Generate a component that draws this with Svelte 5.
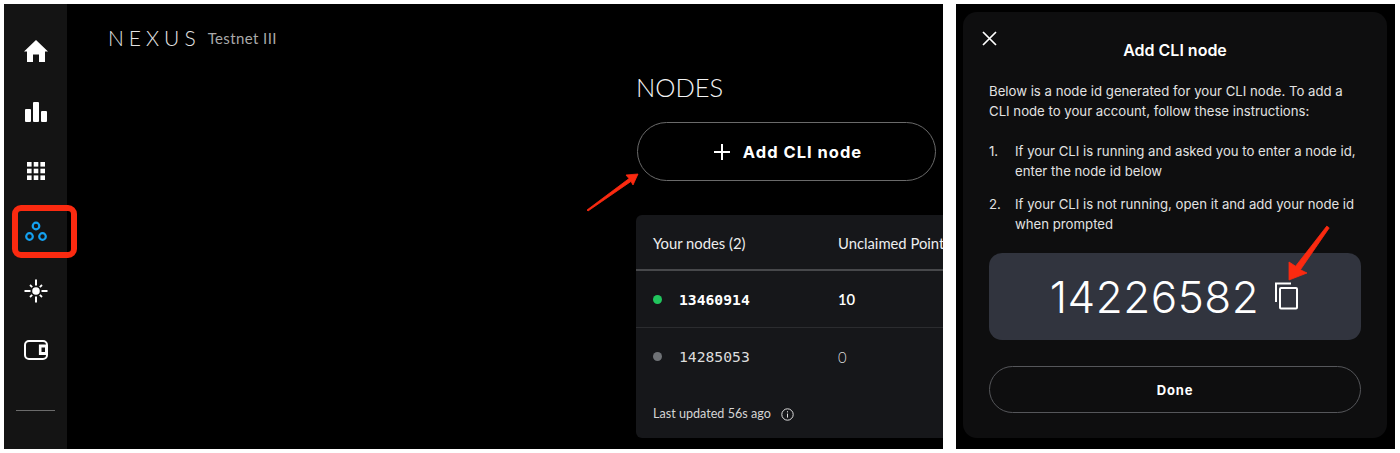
<script>
  const navIcons = ['home', 'bars', 'grid', 'nodes', 'sun', 'wallet'];
  const nodes = [
    { id: '13460914', points: '10', online: true },
    { id: '14285053', points: '0', online: false }
  ];
</script>

<div class="page">
  <section class="shot left">
    <nav class="sidebar">
      {#each navIcons as icon}
        <div class="nav-item">
          {#if icon === 'home'}
            <svg width="26" height="24" viewBox="0 0 26 24" fill="#fff">
              <path d="M13 1 L25 12.4 L22 12.4 L22 23 L16 23 L16 15.5 L10 15.5 L10 23 L4 23 L4 12.4 L1 12.4 Z" />
            </svg>
          {:else if icon === 'bars'}
            <svg class="bars" width="24" height="22" viewBox="0 0 24 22" fill="#fff">
              <rect x="1" y="8" width="6" height="13" rx="1" />
              <rect x="9" y="1" width="6" height="20" rx="1" />
              <rect x="17" y="10" width="6" height="11" rx="1" />
            </svg>
          {:else if icon === 'grid'}
            <svg width="18" height="18" viewBox="0 0 18 18" fill="#fff">
              <rect x="0" y="0" width="4.6" height="4.6" /><rect x="6.7" y="0" width="4.6" height="4.6" /><rect x="13.4" y="0" width="4.6" height="4.6" />
              <rect x="0" y="6.7" width="4.6" height="4.6" /><rect x="6.7" y="6.7" width="4.6" height="4.6" /><rect x="13.4" y="6.7" width="4.6" height="4.6" />
              <rect x="0" y="13.4" width="4.6" height="4.6" /><rect x="6.7" y="13.4" width="4.6" height="4.6" /><rect x="13.4" y="13.4" width="4.6" height="4.6" />
            </svg>
          {:else if icon === 'nodes'}
            <svg width="24" height="22" viewBox="0 0 24 22" fill="none" stroke="#14a1f0" stroke-width="2.2">
              <circle cx="12" cy="6" r="3.3" />
              <circle cx="5.5" cy="16.5" r="3.3" />
              <circle cx="18.5" cy="16.5" r="3.3" />
            </svg>
          {:else if icon === 'sun'}
            <svg width="24" height="24" viewBox="0 0 24 24" fill="none" stroke="#fff" stroke-width="2">
              <circle cx="12" cy="12" r="3.8" fill="#fff" stroke="none" />
              <path d="M12 0.5V6.5M12 17.5V23.5M0.5 12H6.5M17.5 12H23.5" />
              <path d="M6 6L8.2 8.2M18 6L15.8 8.2M6 18L8.2 15.8M18 18L15.8 15.8" stroke-width="1.8" />
            </svg>
          {:else}
            <svg class="wallet" width="24" height="20" viewBox="0 0 24 20" fill="none" stroke="#fff" stroke-width="2">
              <rect x="1" y="1" width="22" height="18" rx="4" />
              <path d="M23 5H15.5V14.5H23" fill="#fff" stroke-width="1.2" />
              <rect x="17.5" y="7.5" width="3.5" height="4.5" fill="#141414" stroke="none" />
            </svg>
          {/if}
        </div>
      {/each}
      <div class="nav-rule"></div>
    </nav>

    <main class="content">
      <header class="brand">
        <span class="wordmark">NEXUS</span>
        <span class="network">Testnet III</span>
      </header>

      <div class="nodes-col">
        <h1>NODES</h1>
        <button class="add-btn">
          <svg width="16" height="16" viewBox="0 0 16 16" stroke="#fff" stroke-width="2">
            <path d="M8 0V16M0 8H16" />
          </svg>
          Add CLI node
        </button>

        <div class="card">
          <div class="row head">
            <span class="col-id">Your nodes (2)</span>
            <span class="col-points">Unclaimed Points</span>
          </div>
          {#each nodes as node}
            <div class="row node" class:online={node.online}>
              <span class="col-id">
                <i class="dot"></i>
                <span class="node-id">{node.id}</span>
              </span>
              <span class="col-points">{node.points}</span>
            </div>
          {/each}
          <div class="updated">
            Last updated 56s ago
            <svg width="13" height="13" viewBox="0 0 13 13" fill="none" stroke="#ddd" stroke-width="1">
              <circle cx="6.5" cy="6.5" r="5.7" />
              <path d="M6.5 5.6V9.6M6.5 3.2V4.4" />
            </svg>
          </div>
        </div>
      </div>
    </main>

    <div class="highlight"></div>
    <svg class="arrow" style="left:580px;top:165px" width="70" height="52" viewBox="0 0 70 52">
      <path d="M3 41 L45 9.6 L42 6 L54 5 L49 16 L47 12.4 L4 42 Z" fill="#fb2a10" stroke="#fb2a10" stroke-width="0.8" stroke-linejoin="round" />
    </svg>
  </section>

  <section class="shot right">
    <div class="modal">
      <button class="close" aria-label="Close">
        <svg width="15" height="15" viewBox="0 0 15 15" stroke="#fff" stroke-width="1.7">
          <path d="M1 1L14 14M14 1L1 14" />
        </svg>
      </button>
      <h2>Add CLI node</h2>
      <p class="intro">Below is a node id generated for your CLI node. To add a CLI node to your account, follow these instructions:</p>
      <ol>
        <li><span class="num">1.</span><span>If your CLI is running and asked you to enter a node id, enter the node id below</span></li>
        <li><span class="num">2.</span><span>If your CLI is not running, open it and add your node id when prompted</span></li>
      </ol>
      <div class="id-box">
        <span class="big-id">14226582</span>
        <svg class="copy" width="25" height="29" viewBox="0 0 25 29" fill="none" stroke="#fff" stroke-width="2">
          <path d="M2 21V2.5H17" />
          <rect x="6" y="7" width="17" height="20.5" rx="1" />
        </svg>
      </div>
      <button class="done">Done</button>
    </div>
    <svg class="arrow" style="left:326px;top:218px" width="54" height="70" viewBox="0 0 54 70">
      <path d="M44.8 4.1 L13.6 44.2 L7 40 L7 58 L25 51 L18.4 47.8 L47.2 5.9 Z" fill="#fb2a10" stroke="#fb2a10" stroke-width="0.8" stroke-linejoin="round" />
    </svg>
  </section>
</div>

<style>
  :global(body) { margin: 0; background: #fff; }

  .page {
    display: flex;
    gap: 13px;
    padding: 4px 5px 4px 4px;
    height: 453px;
    box-sizing: border-box;
    font-family: 'Lato', sans-serif;
    color: #fff;
  }

  .shot { position: relative; height: 445px; overflow: hidden; background: #000; }
  .left { width: 939px; display: flex; }
  .right { width: 439px; }

  .sidebar {
    width: 63px;
    background: #141414;
    display: flex;
    flex-direction: column;
    align-items: center;
    padding-top: 17.5px;
    box-sizing: border-box;
    flex-shrink: 0;
  }
  .nav-item {
    height: 59.8px;
    display: flex;
    align-items: center;
    justify-content: center;
    flex-shrink: 0;
  }
  .bars { margin-top: 2px; }
  .wallet { margin-bottom: 1px; }
  .nav-rule { width: 39px; height: 1px; background: #6b6b6b; margin-top: 29.5px; }

  .content { flex: 1; min-width: 0; padding: 23px 0 0 41px; }
  .brand { display: flex; align-items: center; height: 22px; }
  .wordmark {
    font-weight: 300;
    font-size: 21px;
    line-height: 22px;
    letter-spacing: 5px;
    color: #e4e4e4;
  }
  .network { font-size: 15px; line-height: 22px; margin-left: 7px; color: #a9a9a9; letter-spacing: 0.4px; }

  .nodes-col { margin: 23px 0 0 529px; width: 400px; }
  h1 {
    margin: 0 0 0 -1px;
    font-weight: 300;
    font-size: 25.5px;
    line-height: 30px;
    color: #f4f4f4;
  }
  .add-btn {
    margin-top: 20px;
    width: 299px;
    height: 59px;
    border: 1px solid #6a6a6a;
    border-radius: 30px;
    background: #000;
    color: #fff;
    font-family: 'Inter', sans-serif;
    font-weight: 700;
    font-size: 16.5px;
    letter-spacing: 1px;
    display: flex;
    align-items: center;
    justify-content: center;
    gap: 13px;
    padding: 0 0 0 3px;
  }

  .card {
    margin-top: 34px;
    margin-left: -1px;
    height: 223px;
    background: #16171a;
    border-radius: 6px;
  }
  .row { display: flex; align-items: center; font-size: 14.8px; }
  .head { height: 54px; border-bottom: 2px solid #47484b; color: #eee; padding-top: 1px; box-sizing: content-box; height: 53px; }
  .node { height: 57px; border-bottom: 1px solid #2b2c2f; color: #ddd; box-sizing: border-box; }
  .node + .node { border-bottom: none; }
  .node + .node .col-points { font-weight: 300; }
  .col-id { width: 202px; padding-left: 17px; box-sizing: border-box; display: flex; align-items: center; flex-shrink: 0; }
  .col-points { white-space: nowrap; }
  .dot { width: 9px; height: 9px; border-radius: 50%; background: #6f7276; margin-right: 17px; }
  .online .dot { background: #21c55d; }
  .node-id { font-family: 'DejaVu Sans Mono', monospace; font-size: 14.7px; }
  .online { color: #fff; font-weight: 700; }
  .online .col-points { font-weight: 600; }
  .updated {
    margin-top: 21px;
    padding-left: 17px;
    font-size: 12.6px;
    line-height: 16px;
    color: #d4d4d4;
    display: flex;
    align-items: center;
    gap: 10px;
  }

  .highlight {
    position: absolute;
    left: 8px;
    top: 201px;
    width: 65px;
    height: 53px;
    box-sizing: border-box;
    border: 6px solid #fb2a10;
    border-radius: 9px;
  }
  .arrow { position: absolute; }

  .modal {
    margin: 8px 0 0 7px;
    width: 424px;
    height: 426px;
    background: #0e0e0f;
    border-radius: 14px;
    position: relative;
    padding: 26px 26px 0;
    box-sizing: border-box;
    font-family: 'Inter', sans-serif;
    font-size: 13.2px;
    line-height: 20px;
    color: #e2e2e2;
  }
  .close {
    position: absolute;
    left: 19px;
    top: 19px;
    background: none;
    border: none;
    padding: 0;
    line-height: 0;
  }
  h2 { margin: 0; font-size: 16px; line-height: 24px; font-weight: 600; color: #fff; text-align: center; }
  .intro { margin: 19px 0 0; }
  ol { list-style: none; margin: 20px 0 0; padding: 0; display: flex; flex-direction: column; gap: 13px; }
  li { display: flex; }
  .num { width: 26px; flex-shrink: 0; }

  .id-box {
    margin-top: 19px;
    height: 87px;
    background: #31343e;
    border-radius: 13px;
    display: flex;
    align-items: center;
    justify-content: center;
    gap: 15px;
    color: #fff;
    padding-right: 1px;
  }
  .big-id { font-weight: 300; font-size: 44px; line-height: 1; letter-spacing: 0.5px; }
  .copy { margin-bottom: 2px; }

  .done {
    display: block;
    margin-top: 26px;
    width: 100%;
    height: 47px;
    background: none;
    border: 1px solid #55565a;
    border-radius: 24px;
    color: #fff;
    font-family: 'Inter', sans-serif;
    font-weight: 700;
    font-size: 13px;
    letter-spacing: 0.8px;
    padding: 0;
  }
</style>
